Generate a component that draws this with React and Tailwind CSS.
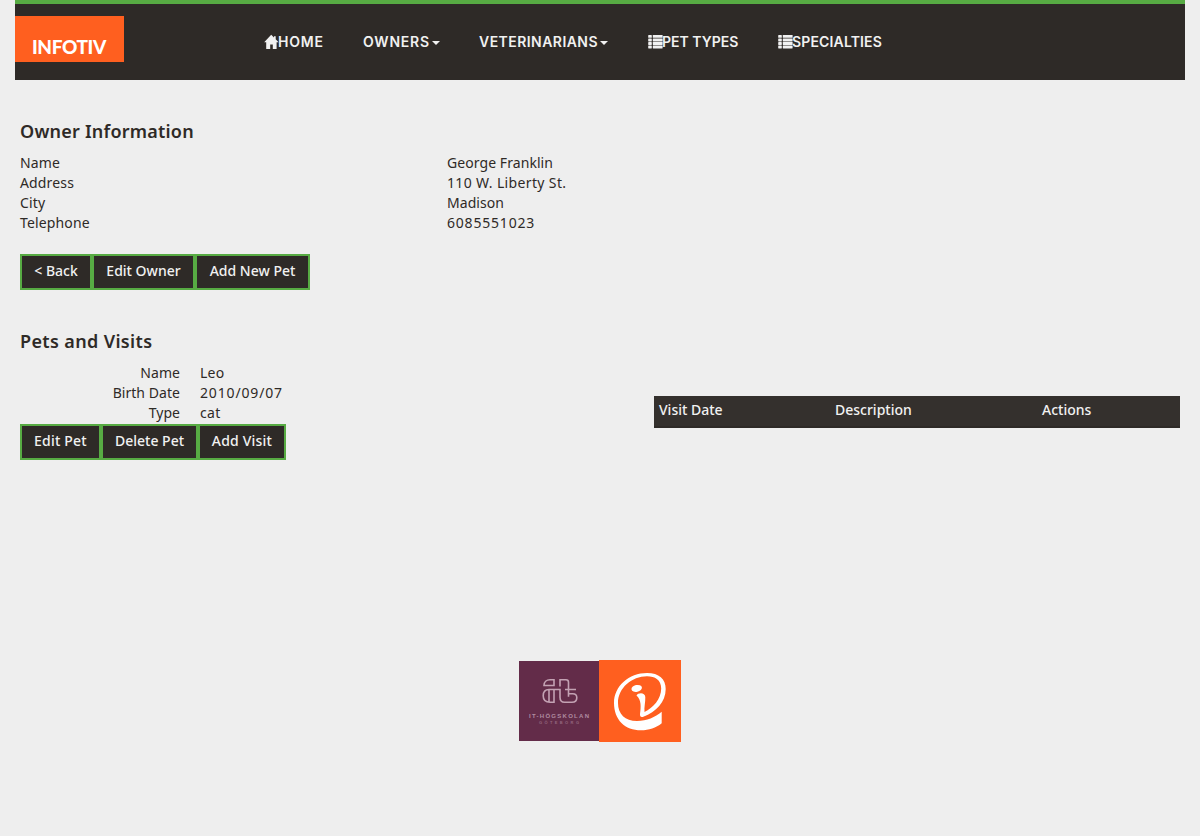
const BODY = "font-['Noto_Sans',sans-serif]";

function ListIcon() {
  return (
    <svg className="h-[14px] w-[15px] shrink-0 -mr-px" viewBox="0 0 15 14" fill="currentColor">
      {[0, 3.6, 7.1, 10.6].map((y) => (
        <g key={y}>
          <rect x="0.2" y={y} width="3.6" height="2.8" rx="0.4" />
          <rect x="4.8" y={y} width="9.8" height="2.8" rx="0.4" />
        </g>
      ))}
    </svg>
  );
}

function HomeIcon() {
  return (
    <svg className="h-[15px] w-[14px] shrink-0 overflow-visible" viewBox="0 0 14 15" fill="currentColor">
      <path d="M7.200 -.3 10 2.500V1.300h1.700v2.900L14.600 7.200H12.600V14H8.800V9.500H6.200V14H2.200V7.200H.200Z" />
    </svg>
  );
}

function Caret() {
  return (
    <svg className="ml-[2px] mt-[2px] h-1 w-2 shrink-0" viewBox="0 0 8 4" fill="currentColor">
      <path d="M0 0h8L4 4z" />
    </svg>
  );
}

function NavItem({ icon, label, caret, className, text }) {
  return (
    <li className={`flex h-5 items-center ${className}`}>
      {icon}
      <span className={`whitespace-nowrap ${text}`}>{label}</span>
      {caret && <Caret />}
    </li>
  );
}

function Button({ children, className }) {
  return (
    <button
      className={`flex h-9 justify-center whitespace-nowrap border-2 border-[#57ab43] bg-[#2e2a27] pt-[5px] font-medium leading-5 text-[#f1f1f1] ${className}`}
    >
      {children}
    </button>
  );
}

function SchoolLogo() {
  return (
    <svg className="mt-px h-20 w-20" viewBox="0 0 80 80">
      <rect width="80" height="80" fill="#632c49" />
      <g fill="none" stroke="#c3a2b3" strokeWidth="1.6">
        <path d="M35 18.800v5.700h-10c0-3.500 2.500-5.700 6-5.700z" />
        <path d="M38 28.500h-8c-4 0-5.800 2.500-5.800 6.300s2.300 6.500 6.800 6.500h4V28.500M30 28.500v12.500" />
        <path d="M41 25.500v-6.700h6c1.500 0 2.500 1 2.500 2.500v14.500" />
        <path d="M38 28.500h3v7.800c0 3 1.500 5 4.500 5h7.500c3 0 4.800-2 4.800-4.500s-1.800-4-4-4h-4.300M46 28.500h11" />
      </g>
      <g fill="#b08ba0" fontFamily="Liberation Sans, sans-serif" fontWeight="bold">
        <text x="10" y="56.500" fontSize="6" textLength="60">IT-HÖGSKOLAN</text>
        <text x="20" y="63" fontSize="4" textLength="40" fill="#93677f">GÖTEBORG</text>
      </g>
    </svg>
  );
}

function InfotivMark() {
  return (
    <svg className="h-[82px] w-[82px]" viewBox="0 0 82 82">
      <rect width="82" height="82" fill="#ff5f1f" />
      <path
        fill="#fff"
        d="M62.700 51.700V63.300C57 68 50 70.300 42 70.300C26 70.300 15 60 15 43C15 26 30 13 48 13C60 13 66.700 19 66.700 29C66.700 42 57 52 44.300 56.700C42 57.600 40.800 56.500 41 54C42 47 42.500 40 37.500 35.500C39 32.500 46 32 46.300 37C46.500 42 45 47 45.500 52C54 48 62.200 39 62.200 28.500C62.200 20 56 16.300 48 16.300C33 16.300 19 28 19 43C19 54 26 61 38 61C48 61 56 57 62.700 51.700Z"
      />
      <ellipse cx="37.700" cy="28.400" rx="5.300" ry="3.400" transform="rotate(-12 37.700 28.400)" fill="#fff" />
    </svg>
  );
}

const owner = [
  ["Name", "George Franklin", "tracking-[0.07px]"],
  ["Address", "110 W. Liberty St.", "tracking-[0.36px]"],
  ["City", "Madison", "tracking-[0.07px]"],
  ["Telephone", "6085551023", "tracking-[0.8px]"],
];

const pet = [
  ["Name", "Leo", "tracking-[0.2px]"],
  ["Birth Date", "2010/09/07", "tracking-[0.85px]"],
  ["Type", "cat", "tracking-[0.4px]"],
];

export default function App() {
  return (
    <div className={`flex h-[836px] flex-col overflow-hidden bg-[#eeeeee] px-[15px] text-[14px] leading-5 text-[#2e2a27] ${BODY}`}>
      <nav className="flex h-20 items-start border-t-4 border-[#57ab43] bg-[#2e2a27] text-[#f1f1f1]">
        <div className="mt-3 flex h-[46px] w-[109px] shrink-0 bg-[#ff5f1f] pl-[17px] pt-[20px] font-['Lato',sans-serif] text-[19px] font-black leading-[22px] tracking-[-0.4px] text-white">
          INFOTIV
        </div>
        <ul className="ml-[140px] mt-[28px] flex font-['Inter',sans-serif] font-semibold">
          <NavItem className="w-[99px]" icon={<HomeIcon />} label="HOME" text="tracking-[0.8px]" />
          <NavItem className="w-[116px]" label="OWNERS" caret text="tracking-[0.8px]" />
          <NavItem className="w-[169px]" label="VETERINARIANS" caret text="tracking-[0.45px]" />
          <NavItem className="w-[130px]" icon={<ListIcon />} label="PET TYPES" text="" />
          <NavItem className="w-[120px]" icon={<ListIcon />} label="SPECIALTIES" text="tracking-[0.15px]" />
        </ul>
      </nav>

      <main className="flex flex-col px-[5px]">
        <h2 className="mt-[41px] h-5 text-[18px] font-semibold leading-5 tracking-[0.22px]">
          Owner Information
        </h2>
        <dl className="mt-3">
          {owner.map(([k, v, tracking]) => (
            <div key={k} className="flex h-5">
              <dt className="w-[427px] tracking-[0.15px]">{k}</dt>
              <dd className={tracking}>{v}</dd>
            </div>
          ))}
        </dl>
        <div className="mt-[21px] flex">
          <Button className="w-[72px]">&lt; Back</Button>
          <Button className="w-[103px]">Edit Owner</Button>
          <Button className="w-[115px]">Add New Pet</Button>
        </div>

        <h2 className="mt-[41px] h-5 text-[18px] font-semibold leading-5 tracking-[0.36px]">
          Pets and Visits
        </h2>
        <section className="mt-3 flex justify-between">
          <div>
            <dl>
              {pet.map(([k, v, tracking]) => (
                <div key={k} className="flex h-5 gap-5">
                  <dt className="w-[160px] text-right tracking-[0.05px]">{k}</dt>
                  <dd className={tracking}>{v}</dd>
                </div>
              ))}
            </dl>
            <div className="mt-px flex">
              <Button className="w-[81px] tracking-[0.2px]">Edit Pet</Button>
              <Button className="w-[97px]">Delete Pet</Button>
              <Button className="w-[88px] tracking-[0.2px]">Add Visit</Button>
            </div>
          </div>
          <div className="mt-[33px] flex h-8 w-[526px] border-b-2 border-[#2e2a27] bg-[#34302d] pl-[5px] pt-1 font-medium text-[#f1f1f1]">
            <span className="w-[176px]">Visit Date</span>
            <span className="w-[207px]">Description</span>
            <span>Actions</span>
          </div>
        </section>
      </main>

      <footer className="mt-[200px] flex justify-center">
        <SchoolLogo />
        <InfotivMark />
      </footer>
    </div>
  );
}
